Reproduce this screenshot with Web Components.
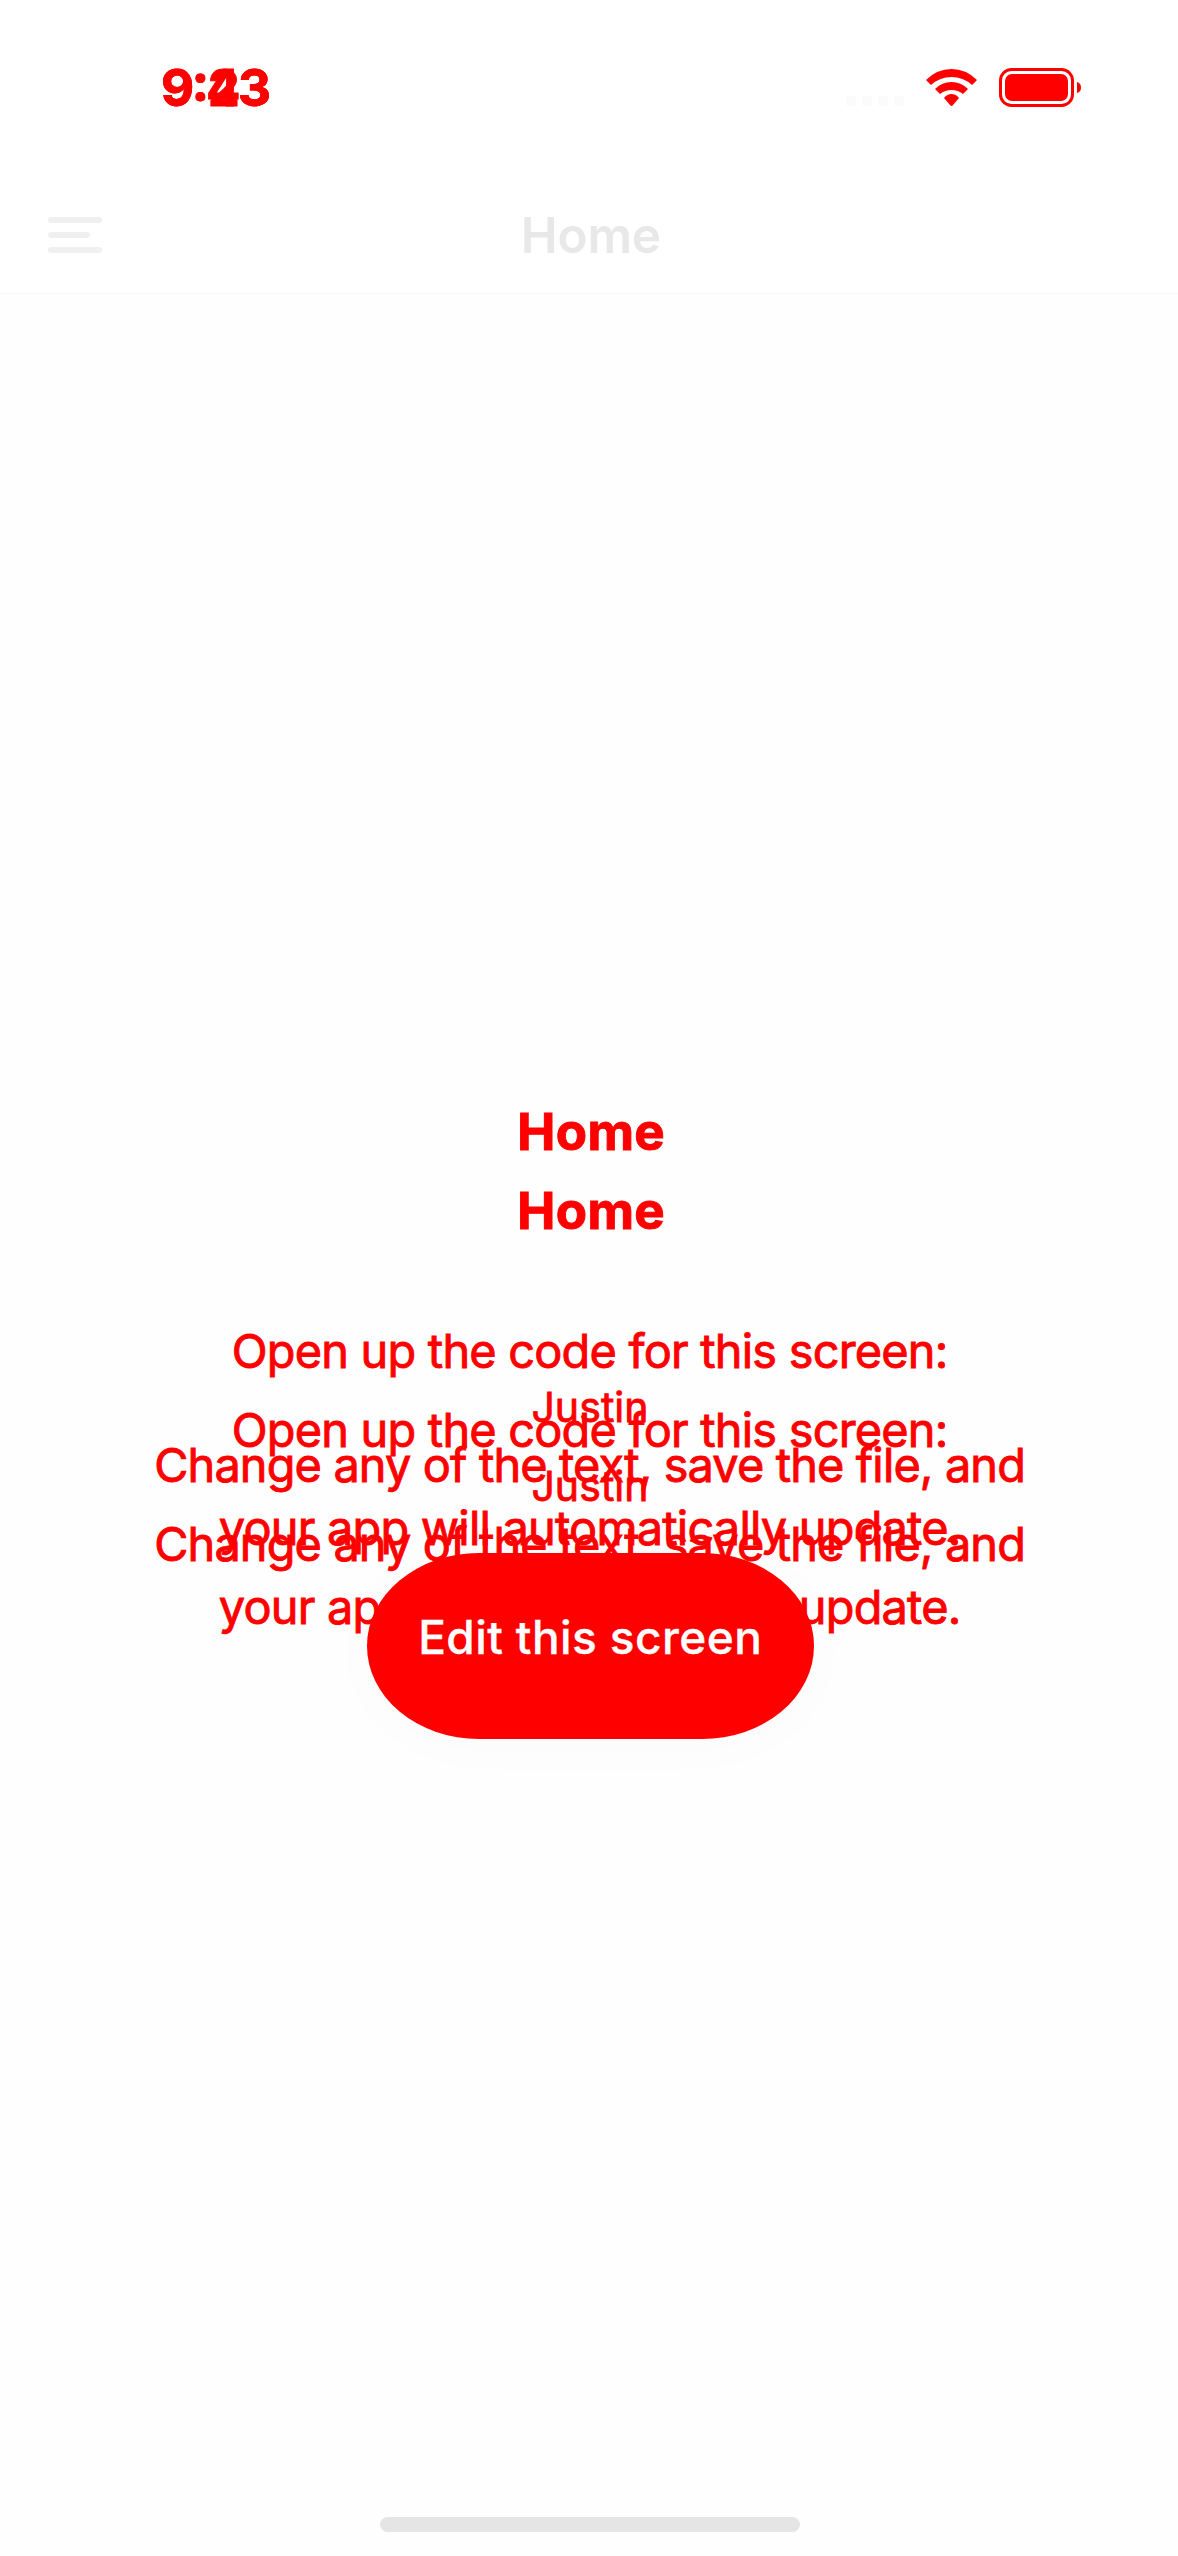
<!DOCTYPE html>
<html lang="en"><head><meta charset="utf-8"><title>Home</title>
<style>html,body{margin:0;background:#fff}body{font-family:Inter,"Liberation Sans",sans-serif}</style></head>
<body><app-screen></app-screen>
<script>
const define=(name,html,init)=>customElements.define(name,class extends HTMLElement{
  constructor(){super();this.attachShadow({mode:'open'}).innerHTML=html;}
  connectedCallback(){if(init)init(this);}
});

// A single centred line whose tracking is set so that its ink spans the given width.
define('type-line',`<style>
:host{display:flex;justify-content:center;height:60px;line-height:60px;white-space:pre;color:red}
</style><span><slot></slot></span>`,el=>{
  const size=+el.getAttribute('size'),weight=el.getAttribute('weight')||400,ink=+el.getAttribute('ink'),text=el.textContent;
  const c=document.createElement('canvas').getContext('2d');
  c.font=`${weight} ${size}px Inter`;
  const m=c.measureText(text),natural=m.actualBoundingBoxLeft+m.actualBoundingBoxRight;
  const gap=(ink-natural)/(text.length-1);
  const s=el.shadowRoot.querySelector('span');
  s.style.cssText=`font-size:${size}px;font-weight:${weight};letter-spacing:${gap}px;margin-right:${-gap}px;font-variant-ligatures:none;-webkit-text-stroke:${el.getAttribute('stroke')||0}px currentColor`;
});

define('status-bar',`<style>
:host{display:flex;height:176px;box-sizing:border-box;padding:0 96px 0 161px;justify-content:space-between;align-items:flex-start}
.time{display:grid;padding-top:58px;width:110px}
.time type-line{grid-area:1/1;justify-content:flex-start;font-feature-settings:"case"}
svg{display:block;margin-top:64px}
</style>
<div class="time"><type-line size="51" weight="700" ink="106" stroke=".8">9:23</type-line><type-line size="51" weight="700" ink="106" stroke=".8">9:43</type-line></div>
<svg width="238" height="48" viewBox="844 64 238 48">
<g fill="#fafafa"><rect x="846" y="96" width="10" height="10" rx="3.5"/><rect x="862" y="96" width="10" height="10" rx="3.5"/><rect x="878" y="96" width="10" height="10" rx="3.5"/><rect x="894" y="96" width="10" height="10" rx="3.5"/></g>
<g fill="red"><path d="M926 80Q937 69 951.500 69Q966 69 977 80L972 85Q963 77 951.500 77Q940 77 931 85Z"/>
<path d="M935 89Q942 82 951.500 82Q961 82 968 89L963 94Q958 90 951.500 90Q945 90 940 94Z"/>
<path d="M944 98Q947 94 951.500 94Q956 94 959 98L953 105Q951.500 107 950 105Z"/>
<rect x="1005" y="74" width="63" height="27" rx="7"/><path d="M1077 82Q1081 83 1081 87.500Q1081 92 1077 93Z"/></g>
<rect x="1000.500" y="69.500" width="72" height="36" rx="11" fill="none" stroke="red" stroke-width="3"/>
</svg>`);

define('menu-icon',`<style>:host{display:flex;flex-direction:column;gap:9px;width:54px}i{height:6px;border-radius:3px;background:#f0f0f0}.s{width:42px}</style><i></i><i class="s"></i><i></i>`);

define('nav-bar',`<style>
:host{display:grid;grid-template-columns:54px 1fr 54px;padding:0 48px;height:117px;box-sizing:border-box;box-shadow:0 1px 1px #f8f8f8;background:#fff;position:relative}
menu-icon{margin-top:41px}type-line{color:#e8e8e8;margin:29px -4px 0 0}
</style><menu-icon></menu-icon><type-line size="49.5" weight="600" ink="136">Home</type-line>`);

define('copy-block',`<style>
:host{display:flex;flex-direction:column}
.open{margin-top:159px}.name{margin-top:-4px}.change{margin-top:-2px}.update{margin-top:3px}
.title{margin-left:4px}.open,.change,.name,.update{margin-left:2px}
</style>
<type-line class="title" size="51" weight="700" ink="143" stroke="1">Home</type-line>
<type-line class="open" size="46.8" ink="711" stroke=".9">Open up the code for this screen:</type-line>
<type-line class="name" size="41" ink="113" stroke=".8">Justin</type-line>
<type-line class="change" size="46.8" ink="867" stroke=".9">Change any of the text, save the file, and</type-line>
<type-line class="update" size="46.8" ink="738" stroke=".9">your app will automatically update.</type-line>`);

define('edit-button',`<style>
:host{display:block;box-sizing:border-box;width:447px;height:186px;padding-top:54px;background:red;border-radius:112px/93px;box-shadow:0 6px 60px rgba(0,0,0,.018)}
type-line{color:#fff}
</style><type-line size="46" weight="500" ink="338" stroke=".3">Edit this screen</type-line>`);

define('home-indicator',`<style>:host{display:block;width:420px;height:15px;border-radius:8px;background:#e5e5e5}</style>`);

define('app-screen',`<style>
:host{display:flex;flex-direction:column;width:1178px;height:2556px;overflow:hidden;background:#fff}
main{flex:1;display:grid;grid-template-rows:1fr;justify-items:center;align-items:start;background:#fefefe}
main>*{grid-area:1/1}
copy-block{width:1178px;margin-top:808.5px}
.second{margin-top:887.5px}
edit-button{margin:1260px 0 0 2px}
home-indicator{align-self:end;margin:0 0 24px 2px}
</style><status-bar></status-bar><nav-bar></nav-bar>
<main><copy-block></copy-block><copy-block class="second"></copy-block><edit-button></edit-button><home-indicator></home-indicator></main>`);
</script></body></html>
